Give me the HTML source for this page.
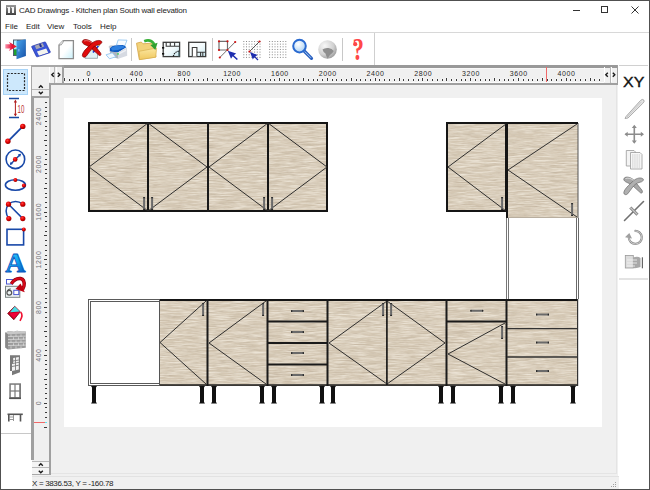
<!DOCTYPE html><html><head><meta charset="utf-8"><style>
*{margin:0;padding:0;box-sizing:border-box}
html,body{width:650px;height:490px;overflow:hidden;background:#fff;font-family:"Liberation Sans", sans-serif}
.a{position:absolute}
svg{position:absolute;overflow:visible}
</style></head><body>
<div class="a" style="left:0;top:0;width:650px;height:490px;background:#fff"></div>
<div class="a" style="left:6px;top:5px;width:10px;height:10px;background:linear-gradient(#9a9a9a,#404040)"></div>
<div class="a" style="left:8px;top:7px;width:2px;height:6px;background:#f4f4f4"></div>
<div class="a" style="left:7px;top:7px;width:1px;height:1px;background:#d8d8d8"></div>
<div class="a" style="left:12px;top:7px;width:2px;height:6px;background:#f4f4f4"></div>
<div class="a" style="left:11px;top:7px;width:1px;height:1px;background:#d8d8d8"></div>
<div class="a" style="left:19px;top:4.6px;font-size:8px;line-height:11px;color:#222;letter-spacing:-0.19px;white-space:nowrap">CAD Drawings - Kitchen plan South wall elevation</div>
<div class="a" style="left:573px;top:10px;width:7px;height:1px;background:#333"></div>
<div class="a" style="left:601px;top:6px;width:7px;height:7px;border:1px solid #333"></div>
<svg style="left:631px;top:6px" width="8" height="8"><path d="M0.5 0.5L7.5 7.5M7.5 0.5L0.5 7.5" stroke="#333" stroke-width="1"/></svg>
<div class="a" style="left:5px;top:20.5px;font-size:8px;line-height:11px;color:#222;white-space:nowrap">File</div>
<div class="a" style="left:26px;top:20.5px;font-size:8px;line-height:11px;color:#222;white-space:nowrap">Edit</div>
<div class="a" style="left:47px;top:20.5px;font-size:8px;line-height:11px;color:#222;white-space:nowrap">View</div>
<div class="a" style="left:73px;top:20.5px;font-size:8px;line-height:11px;color:#222;white-space:nowrap">Tools</div>
<div class="a" style="left:100px;top:20.5px;font-size:8px;line-height:11px;color:#222;white-space:nowrap">Help</div>
<div class="a" style="left:1px;top:32px;width:648px;height:1px;background:#d8d8d8"></div>
<div class="a" style="left:374px;top:33px;width:1px;height:32px;background:#cfcfcf"></div>
<div class="a" style="left:131px;top:38px;width:1px;height:23px;background:#c8c8c8"></div>
<div class="a" style="left:212px;top:38px;width:1px;height:23px;background:#c8c8c8"></div>
<div class="a" style="left:342px;top:38px;width:1px;height:23px;background:#c8c8c8"></div>
<div class="a" style="left:0;top:0;width:650px;height:490px;border:1px solid #505050;pointer-events:none;z-index:50"></div>
<div class="a" style="left:1px;top:65px;width:30px;height:1px;background:#cacaca"></div>
<div class="a" style="left:31px;top:65px;width:1px;height:31px;background:#a8a8a8"></div>
<div class="a" style="left:1px;top:433px;width:30px;height:1px;background:#c8c8c8"></div>
<div class="a" style="left:32px;top:65px;width:586px;height:412px;background:#f0f0f0"></div>
<div class="a" style="left:62px;top:65px;width:556px;height:3px;background:#999"></div><div class="a" style="left:64px;top:68px;width:540px;height:1px;background:#f8f8f8"></div><div class="a" style="left:64px;top:82px;width:540px;height:1px;background:#fbfbfb"></div>
<div class="a" style="left:62px;top:65px;width:2px;height:20px;background:#a0a0a0"></div>
<div class="a" style="left:49px;top:83px;width:569px;height:2px;background:#a0a0a0"></div>
<div class="a" style="left:617px;top:65px;width:1px;height:20px;background:#a0a0a0"></div>
<div class="a" style="left:610px;top:67px;width:1px;height:16px;background:#b8b8b8"></div>
<div class="a" style="left:54px;top:67px;width:1px;height:16px;background:#b8b8b8"></div>
<div class="a" style="left:31px;top:65px;width:31px;height:2px;background:#a8a8a8"></div>
<div class="a" style="left:31px;top:96px;width:3px;height:364px;background:#a0a0a0"></div><div class="a" style="left:32px;top:461px;width:17px;height:14px;background:#f4f4f4;border-top:1px solid #fff;border-bottom:1px solid #a8a8a8"></div>
<div class="a" style="left:32px;top:96px;width:17px;height:2px;background:#a0a0a0"></div>
<div class="a" style="left:49px;top:83px;width:2px;height:392px;background:#a0a0a0"></div>
<div class="a" style="left:32px;top:89px;width:17px;height:1px;background:#b8b8b8"></div>
<div class="a" style="left:32px;top:467px;width:17px;height:1px;background:#b8b8b8"></div>
<div class="a" style="left:32px;top:461px;width:17px;height:1px;background:#b8b8b8"></div>
<div class="a" style="left:604px;top:67px;width:1px;height:15px;background:#fff"></div>
<div class="a" style="left:611px;top:67px;width:1px;height:15px;background:#fff"></div>
<div class="a" style="left:49px;top:67px;width:1px;height:15px;background:#fff"></div>
<div class="a" style="left:56px;top:67px;width:1px;height:15px;background:#fff"></div>
<svg style="left:50.5px;top:72.3px" width="4" height="6"><path d="M2.8 0.8L0.8 2.8L2.8 4.8" fill="none" stroke="#1a1a1a" stroke-width="1.4"/></svg>
<svg style="left:57.2px;top:72.3px" width="4" height="6"><path d="M0.8 0.8L2.8 2.8L0.8 4.8" fill="none" stroke="#1a1a1a" stroke-width="1.4"/></svg>
<svg style="left:605.3px;top:72.3px" width="4" height="6"><path d="M2.8 0.8L0.8 2.8L2.8 4.8" fill="none" stroke="#1a1a1a" stroke-width="1.4"/></svg>
<svg style="left:612.2px;top:72.3px" width="4" height="6"><path d="M0.8 0.8L2.8 2.8L0.8 4.8" fill="none" stroke="#1a1a1a" stroke-width="1.4"/></svg>
<svg style="left:38px;top:84.5px" width="6" height="4"><path d="M0.8 2.8L2.8 0.8L4.8 2.8" fill="none" stroke="#1a1a1a" stroke-width="1.4"/></svg>
<svg style="left:38px;top:91.3px" width="6" height="4"><path d="M0.8 0.8L2.8 2.8L4.8 0.8" fill="none" stroke="#1a1a1a" stroke-width="1.4"/></svg>
<svg style="left:38px;top:463.3px" width="6" height="4"><path d="M0.8 2.8L2.8 0.8L4.8 2.8" fill="none" stroke="#1a1a1a" stroke-width="1.4"/></svg>
<svg style="left:38px;top:469.8px" width="6" height="4"><path d="M0.8 0.8L2.8 2.8L4.8 0.8" fill="none" stroke="#1a1a1a" stroke-width="1.4"/></svg>
<div class="a" style="left:64px;top:98px;width:538px;height:329px;background:#fff"></div>
<div class="a" style="left:51px;top:473px;width:566px;height:1px;background:#e4e4e4"></div>
<div class="a" style="left:616px;top:85px;width:1px;height:389px;background:#e4e4e4"></div>
<div class="a" style="left:32px;top:476px;width:587px;height:13px;background:#f0f0f0"></div>
<div class="a" style="left:32px;top:476px;width:587px;height:1px;background:#e2e2e2"></div>
<div class="a" style="left:32px;top:478px;font-size:8px;line-height:11px;color:#222;letter-spacing:-0.33px;white-space:nowrap">X = 3836.53, Y = -160.78</div>
<div class="a" style="left:615px;top:482px;width:1px;height:1px;background:#a0a0a0"></div><div class="a" style="left:613px;top:484px;width:1px;height:1px;background:#a0a0a0"></div><div class="a" style="left:615px;top:484px;width:1px;height:1px;background:#a0a0a0"></div><div class="a" style="left:611px;top:486px;width:1px;height:1px;background:#a0a0a0"></div><div class="a" style="left:613px;top:486px;width:1px;height:1px;background:#a0a0a0"></div><div class="a" style="left:615px;top:486px;width:1px;height:1px;background:#a0a0a0"></div>
<svg style="left:0;top:0" width="650" height="490"><rect x="63.5" y="77.5" width="2" height="4" fill="#fff" opacity="0.7"/><rect x="64" y="78" width="1" height="3" fill="#3a3a3a"/><rect x="68.5" y="78.5" width="2" height="3" fill="#fff" opacity="0.7"/><rect x="69" y="79" width="1" height="2" fill="#3a3a3a"/><rect x="73.5" y="78.5" width="2" height="3" fill="#fff" opacity="0.7"/><rect x="74" y="79" width="1" height="2" fill="#3a3a3a"/><rect x="77.5" y="78.5" width="2" height="3" fill="#fff" opacity="0.7"/><rect x="78" y="79" width="1" height="2" fill="#3a3a3a"/><rect x="82.5" y="78.5" width="2" height="3" fill="#fff" opacity="0.7"/><rect x="83" y="79" width="1" height="2" fill="#3a3a3a"/><rect x="87.5" y="77.5" width="2" height="4" fill="#fff" opacity="0.7"/><rect x="88" y="78" width="1" height="3" fill="#3a3a3a"/><rect x="92.5" y="78.5" width="2" height="3" fill="#fff" opacity="0.7"/><rect x="93" y="79" width="1" height="2" fill="#3a3a3a"/><rect x="97.5" y="78.5" width="2" height="3" fill="#fff" opacity="0.7"/><rect x="98" y="79" width="1" height="2" fill="#3a3a3a"/><rect x="101.5" y="78.5" width="2" height="3" fill="#fff" opacity="0.7"/><rect x="102" y="79" width="1" height="2" fill="#3a3a3a"/><rect x="106.5" y="78.5" width="2" height="3" fill="#fff" opacity="0.7"/><rect x="107" y="79" width="1" height="2" fill="#3a3a3a"/><rect x="111.5" y="77.5" width="2" height="4" fill="#fff" opacity="0.7"/><rect x="112" y="78" width="1" height="3" fill="#3a3a3a"/><rect x="116.5" y="78.5" width="2" height="3" fill="#fff" opacity="0.7"/><rect x="117" y="79" width="1" height="2" fill="#3a3a3a"/><rect x="120.5" y="78.5" width="2" height="3" fill="#fff" opacity="0.7"/><rect x="121" y="79" width="1" height="2" fill="#3a3a3a"/><rect x="125.5" y="78.5" width="2" height="3" fill="#fff" opacity="0.7"/><rect x="126" y="79" width="1" height="2" fill="#3a3a3a"/><rect x="130.5" y="78.5" width="2" height="3" fill="#fff" opacity="0.7"/><rect x="131" y="79" width="1" height="2" fill="#3a3a3a"/><rect x="135.5" y="77.5" width="2" height="4" fill="#fff" opacity="0.7"/><rect x="136" y="78" width="1" height="3" fill="#3a3a3a"/><rect x="140.5" y="78.5" width="2" height="3" fill="#fff" opacity="0.7"/><rect x="141" y="79" width="1" height="2" fill="#3a3a3a"/><rect x="144.5" y="78.5" width="2" height="3" fill="#fff" opacity="0.7"/><rect x="145" y="79" width="1" height="2" fill="#3a3a3a"/><rect x="149.5" y="78.5" width="2" height="3" fill="#fff" opacity="0.7"/><rect x="150" y="79" width="1" height="2" fill="#3a3a3a"/><rect x="154.5" y="78.5" width="2" height="3" fill="#fff" opacity="0.7"/><rect x="155" y="79" width="1" height="2" fill="#3a3a3a"/><rect x="159.5" y="77.5" width="2" height="4" fill="#fff" opacity="0.7"/><rect x="160" y="78" width="1" height="3" fill="#3a3a3a"/><rect x="163.5" y="78.5" width="2" height="3" fill="#fff" opacity="0.7"/><rect x="164" y="79" width="1" height="2" fill="#3a3a3a"/><rect x="168.5" y="78.5" width="2" height="3" fill="#fff" opacity="0.7"/><rect x="169" y="79" width="1" height="2" fill="#3a3a3a"/><rect x="173.5" y="78.5" width="2" height="3" fill="#fff" opacity="0.7"/><rect x="174" y="79" width="1" height="2" fill="#3a3a3a"/><rect x="178.5" y="78.5" width="2" height="3" fill="#fff" opacity="0.7"/><rect x="179" y="79" width="1" height="2" fill="#3a3a3a"/><rect x="183.5" y="77.5" width="2" height="4" fill="#fff" opacity="0.7"/><rect x="184" y="78" width="1" height="3" fill="#3a3a3a"/><rect x="187.5" y="78.5" width="2" height="3" fill="#fff" opacity="0.7"/><rect x="188" y="79" width="1" height="2" fill="#3a3a3a"/><rect x="192.5" y="78.5" width="2" height="3" fill="#fff" opacity="0.7"/><rect x="193" y="79" width="1" height="2" fill="#3a3a3a"/><rect x="197.5" y="78.5" width="2" height="3" fill="#fff" opacity="0.7"/><rect x="198" y="79" width="1" height="2" fill="#3a3a3a"/><rect x="202.5" y="78.5" width="2" height="3" fill="#fff" opacity="0.7"/><rect x="203" y="79" width="1" height="2" fill="#3a3a3a"/><rect x="206.5" y="77.5" width="2" height="4" fill="#fff" opacity="0.7"/><rect x="207" y="78" width="1" height="3" fill="#3a3a3a"/><rect x="211.5" y="78.5" width="2" height="3" fill="#fff" opacity="0.7"/><rect x="212" y="79" width="1" height="2" fill="#3a3a3a"/><rect x="216.5" y="78.5" width="2" height="3" fill="#fff" opacity="0.7"/><rect x="217" y="79" width="1" height="2" fill="#3a3a3a"/><rect x="221.5" y="78.5" width="2" height="3" fill="#fff" opacity="0.7"/><rect x="222" y="79" width="1" height="2" fill="#3a3a3a"/><rect x="226.5" y="78.5" width="2" height="3" fill="#fff" opacity="0.7"/><rect x="227" y="79" width="1" height="2" fill="#3a3a3a"/><rect x="230.5" y="77.5" width="2" height="4" fill="#fff" opacity="0.7"/><rect x="231" y="78" width="1" height="3" fill="#3a3a3a"/><rect x="235.5" y="78.5" width="2" height="3" fill="#fff" opacity="0.7"/><rect x="236" y="79" width="1" height="2" fill="#3a3a3a"/><rect x="240.5" y="78.5" width="2" height="3" fill="#fff" opacity="0.7"/><rect x="241" y="79" width="1" height="2" fill="#3a3a3a"/><rect x="245.5" y="78.5" width="2" height="3" fill="#fff" opacity="0.7"/><rect x="246" y="79" width="1" height="2" fill="#3a3a3a"/><rect x="249.5" y="78.5" width="2" height="3" fill="#fff" opacity="0.7"/><rect x="250" y="79" width="1" height="2" fill="#3a3a3a"/><rect x="254.5" y="77.5" width="2" height="4" fill="#fff" opacity="0.7"/><rect x="255" y="78" width="1" height="3" fill="#3a3a3a"/><rect x="259.5" y="78.5" width="2" height="3" fill="#fff" opacity="0.7"/><rect x="260" y="79" width="1" height="2" fill="#3a3a3a"/><rect x="264.5" y="78.5" width="2" height="3" fill="#fff" opacity="0.7"/><rect x="265" y="79" width="1" height="2" fill="#3a3a3a"/><rect x="269.5" y="78.5" width="2" height="3" fill="#fff" opacity="0.7"/><rect x="270" y="79" width="1" height="2" fill="#3a3a3a"/><rect x="273.5" y="78.5" width="2" height="3" fill="#fff" opacity="0.7"/><rect x="274" y="79" width="1" height="2" fill="#3a3a3a"/><rect x="278.5" y="77.5" width="2" height="4" fill="#fff" opacity="0.7"/><rect x="279" y="78" width="1" height="3" fill="#3a3a3a"/><rect x="283.5" y="78.5" width="2" height="3" fill="#fff" opacity="0.7"/><rect x="284" y="79" width="1" height="2" fill="#3a3a3a"/><rect x="288.5" y="78.5" width="2" height="3" fill="#fff" opacity="0.7"/><rect x="289" y="79" width="1" height="2" fill="#3a3a3a"/><rect x="292.5" y="78.5" width="2" height="3" fill="#fff" opacity="0.7"/><rect x="293" y="79" width="1" height="2" fill="#3a3a3a"/><rect x="297.5" y="78.5" width="2" height="3" fill="#fff" opacity="0.7"/><rect x="298" y="79" width="1" height="2" fill="#3a3a3a"/><rect x="302.5" y="77.5" width="2" height="4" fill="#fff" opacity="0.7"/><rect x="303" y="78" width="1" height="3" fill="#3a3a3a"/><rect x="307.5" y="78.5" width="2" height="3" fill="#fff" opacity="0.7"/><rect x="308" y="79" width="1" height="2" fill="#3a3a3a"/><rect x="312.5" y="78.5" width="2" height="3" fill="#fff" opacity="0.7"/><rect x="313" y="79" width="1" height="2" fill="#3a3a3a"/><rect x="316.5" y="78.5" width="2" height="3" fill="#fff" opacity="0.7"/><rect x="317" y="79" width="1" height="2" fill="#3a3a3a"/><rect x="321.5" y="78.5" width="2" height="3" fill="#fff" opacity="0.7"/><rect x="322" y="79" width="1" height="2" fill="#3a3a3a"/><rect x="326.5" y="77.5" width="2" height="4" fill="#fff" opacity="0.7"/><rect x="327" y="78" width="1" height="3" fill="#3a3a3a"/><rect x="331.5" y="78.5" width="2" height="3" fill="#fff" opacity="0.7"/><rect x="332" y="79" width="1" height="2" fill="#3a3a3a"/><rect x="335.5" y="78.5" width="2" height="3" fill="#fff" opacity="0.7"/><rect x="336" y="79" width="1" height="2" fill="#3a3a3a"/><rect x="340.5" y="78.5" width="2" height="3" fill="#fff" opacity="0.7"/><rect x="341" y="79" width="1" height="2" fill="#3a3a3a"/><rect x="345.5" y="78.5" width="2" height="3" fill="#fff" opacity="0.7"/><rect x="346" y="79" width="1" height="2" fill="#3a3a3a"/><rect x="350.5" y="77.5" width="2" height="4" fill="#fff" opacity="0.7"/><rect x="351" y="78" width="1" height="3" fill="#3a3a3a"/><rect x="355.5" y="78.5" width="2" height="3" fill="#fff" opacity="0.7"/><rect x="356" y="79" width="1" height="2" fill="#3a3a3a"/><rect x="359.5" y="78.5" width="2" height="3" fill="#fff" opacity="0.7"/><rect x="360" y="79" width="1" height="2" fill="#3a3a3a"/><rect x="364.5" y="78.5" width="2" height="3" fill="#fff" opacity="0.7"/><rect x="365" y="79" width="1" height="2" fill="#3a3a3a"/><rect x="369.5" y="78.5" width="2" height="3" fill="#fff" opacity="0.7"/><rect x="370" y="79" width="1" height="2" fill="#3a3a3a"/><rect x="374.5" y="77.5" width="2" height="4" fill="#fff" opacity="0.7"/><rect x="375" y="78" width="1" height="3" fill="#3a3a3a"/><rect x="378.5" y="78.5" width="2" height="3" fill="#fff" opacity="0.7"/><rect x="379" y="79" width="1" height="2" fill="#3a3a3a"/><rect x="383.5" y="78.5" width="2" height="3" fill="#fff" opacity="0.7"/><rect x="384" y="79" width="1" height="2" fill="#3a3a3a"/><rect x="388.5" y="78.5" width="2" height="3" fill="#fff" opacity="0.7"/><rect x="389" y="79" width="1" height="2" fill="#3a3a3a"/><rect x="393.5" y="78.5" width="2" height="3" fill="#fff" opacity="0.7"/><rect x="394" y="79" width="1" height="2" fill="#3a3a3a"/><rect x="398.5" y="77.5" width="2" height="4" fill="#fff" opacity="0.7"/><rect x="399" y="78" width="1" height="3" fill="#3a3a3a"/><rect x="402.5" y="78.5" width="2" height="3" fill="#fff" opacity="0.7"/><rect x="403" y="79" width="1" height="2" fill="#3a3a3a"/><rect x="407.5" y="78.5" width="2" height="3" fill="#fff" opacity="0.7"/><rect x="408" y="79" width="1" height="2" fill="#3a3a3a"/><rect x="412.5" y="78.5" width="2" height="3" fill="#fff" opacity="0.7"/><rect x="413" y="79" width="1" height="2" fill="#3a3a3a"/><rect x="417.5" y="78.5" width="2" height="3" fill="#fff" opacity="0.7"/><rect x="418" y="79" width="1" height="2" fill="#3a3a3a"/><rect x="421.5" y="77.5" width="2" height="4" fill="#fff" opacity="0.7"/><rect x="422" y="78" width="1" height="3" fill="#3a3a3a"/><rect x="426.5" y="78.5" width="2" height="3" fill="#fff" opacity="0.7"/><rect x="427" y="79" width="1" height="2" fill="#3a3a3a"/><rect x="431.5" y="78.5" width="2" height="3" fill="#fff" opacity="0.7"/><rect x="432" y="79" width="1" height="2" fill="#3a3a3a"/><rect x="436.5" y="78.5" width="2" height="3" fill="#fff" opacity="0.7"/><rect x="437" y="79" width="1" height="2" fill="#3a3a3a"/><rect x="441.5" y="78.5" width="2" height="3" fill="#fff" opacity="0.7"/><rect x="442" y="79" width="1" height="2" fill="#3a3a3a"/><rect x="445.5" y="77.5" width="2" height="4" fill="#fff" opacity="0.7"/><rect x="446" y="78" width="1" height="3" fill="#3a3a3a"/><rect x="450.5" y="78.5" width="2" height="3" fill="#fff" opacity="0.7"/><rect x="451" y="79" width="1" height="2" fill="#3a3a3a"/><rect x="455.5" y="78.5" width="2" height="3" fill="#fff" opacity="0.7"/><rect x="456" y="79" width="1" height="2" fill="#3a3a3a"/><rect x="460.5" y="78.5" width="2" height="3" fill="#fff" opacity="0.7"/><rect x="461" y="79" width="1" height="2" fill="#3a3a3a"/><rect x="464.5" y="78.5" width="2" height="3" fill="#fff" opacity="0.7"/><rect x="465" y="79" width="1" height="2" fill="#3a3a3a"/><rect x="469.5" y="77.5" width="2" height="4" fill="#fff" opacity="0.7"/><rect x="470" y="78" width="1" height="3" fill="#3a3a3a"/><rect x="474.5" y="78.5" width="2" height="3" fill="#fff" opacity="0.7"/><rect x="475" y="79" width="1" height="2" fill="#3a3a3a"/><rect x="479.5" y="78.5" width="2" height="3" fill="#fff" opacity="0.7"/><rect x="480" y="79" width="1" height="2" fill="#3a3a3a"/><rect x="484.5" y="78.5" width="2" height="3" fill="#fff" opacity="0.7"/><rect x="485" y="79" width="1" height="2" fill="#3a3a3a"/><rect x="488.5" y="78.5" width="2" height="3" fill="#fff" opacity="0.7"/><rect x="489" y="79" width="1" height="2" fill="#3a3a3a"/><rect x="493.5" y="77.5" width="2" height="4" fill="#fff" opacity="0.7"/><rect x="494" y="78" width="1" height="3" fill="#3a3a3a"/><rect x="498.5" y="78.5" width="2" height="3" fill="#fff" opacity="0.7"/><rect x="499" y="79" width="1" height="2" fill="#3a3a3a"/><rect x="503.5" y="78.5" width="2" height="3" fill="#fff" opacity="0.7"/><rect x="504" y="79" width="1" height="2" fill="#3a3a3a"/><rect x="507.5" y="78.5" width="2" height="3" fill="#fff" opacity="0.7"/><rect x="508" y="79" width="1" height="2" fill="#3a3a3a"/><rect x="512.5" y="78.5" width="2" height="3" fill="#fff" opacity="0.7"/><rect x="513" y="79" width="1" height="2" fill="#3a3a3a"/><rect x="517.5" y="77.5" width="2" height="4" fill="#fff" opacity="0.7"/><rect x="518" y="78" width="1" height="3" fill="#3a3a3a"/><rect x="522.5" y="78.5" width="2" height="3" fill="#fff" opacity="0.7"/><rect x="523" y="79" width="1" height="2" fill="#3a3a3a"/><rect x="527.5" y="78.5" width="2" height="3" fill="#fff" opacity="0.7"/><rect x="528" y="79" width="1" height="2" fill="#3a3a3a"/><rect x="531.5" y="78.5" width="2" height="3" fill="#fff" opacity="0.7"/><rect x="532" y="79" width="1" height="2" fill="#3a3a3a"/><rect x="536.5" y="78.5" width="2" height="3" fill="#fff" opacity="0.7"/><rect x="537" y="79" width="1" height="2" fill="#3a3a3a"/><rect x="541.5" y="77.5" width="2" height="4" fill="#fff" opacity="0.7"/><rect x="542" y="78" width="1" height="3" fill="#3a3a3a"/><rect x="546.5" y="78.5" width="2" height="3" fill="#fff" opacity="0.7"/><rect x="547" y="79" width="1" height="2" fill="#3a3a3a"/><rect x="550.5" y="78.5" width="2" height="3" fill="#fff" opacity="0.7"/><rect x="551" y="79" width="1" height="2" fill="#3a3a3a"/><rect x="555.5" y="78.5" width="2" height="3" fill="#fff" opacity="0.7"/><rect x="556" y="79" width="1" height="2" fill="#3a3a3a"/><rect x="560.5" y="78.5" width="2" height="3" fill="#fff" opacity="0.7"/><rect x="561" y="79" width="1" height="2" fill="#3a3a3a"/><rect x="565.5" y="77.5" width="2" height="4" fill="#fff" opacity="0.7"/><rect x="566" y="78" width="1" height="3" fill="#3a3a3a"/><rect x="569.5" y="78.5" width="2" height="3" fill="#fff" opacity="0.7"/><rect x="570" y="79" width="1" height="2" fill="#3a3a3a"/><rect x="574.5" y="78.5" width="2" height="3" fill="#fff" opacity="0.7"/><rect x="575" y="79" width="1" height="2" fill="#3a3a3a"/><rect x="579.5" y="78.5" width="2" height="3" fill="#fff" opacity="0.7"/><rect x="580" y="79" width="1" height="2" fill="#3a3a3a"/><rect x="584.5" y="78.5" width="2" height="3" fill="#fff" opacity="0.7"/><rect x="585" y="79" width="1" height="2" fill="#3a3a3a"/><rect x="589.5" y="77.5" width="2" height="4" fill="#fff" opacity="0.7"/><rect x="590" y="78" width="1" height="3" fill="#3a3a3a"/><rect x="593.5" y="78.5" width="2" height="3" fill="#fff" opacity="0.7"/><rect x="594" y="79" width="1" height="2" fill="#3a3a3a"/><rect x="598.5" y="78.5" width="2" height="3" fill="#fff" opacity="0.7"/><rect x="599" y="79" width="1" height="2" fill="#3a3a3a"/><text x="88.80" y="76.2" font-size="7" letter-spacing="0.6" text-anchor="middle" fill="#2a2a2a" font-family="Liberation Sans">0</text><text x="136.57" y="76.2" font-size="7" letter-spacing="0.6" text-anchor="middle" fill="#2a2a2a" font-family="Liberation Sans">400</text><text x="184.34" y="76.2" font-size="7" letter-spacing="0.6" text-anchor="middle" fill="#2a2a2a" font-family="Liberation Sans">800</text><text x="232.12" y="76.2" font-size="7" letter-spacing="0.6" text-anchor="middle" fill="#2a2a2a" font-family="Liberation Sans">1200</text><text x="279.89" y="76.2" font-size="7" letter-spacing="0.6" text-anchor="middle" fill="#2a2a2a" font-family="Liberation Sans">1600</text><text x="327.66" y="76.2" font-size="7" letter-spacing="0.6" text-anchor="middle" fill="#2a2a2a" font-family="Liberation Sans">2000</text><text x="375.43" y="76.2" font-size="7" letter-spacing="0.6" text-anchor="middle" fill="#2a2a2a" font-family="Liberation Sans">2400</text><text x="423.20" y="76.2" font-size="7" letter-spacing="0.6" text-anchor="middle" fill="#2a2a2a" font-family="Liberation Sans">2800</text><text x="470.98" y="76.2" font-size="7" letter-spacing="0.6" text-anchor="middle" fill="#2a2a2a" font-family="Liberation Sans">3200</text><text x="518.75" y="76.2" font-size="7" letter-spacing="0.6" text-anchor="middle" fill="#2a2a2a" font-family="Liberation Sans">3600</text><text x="566.52" y="76.2" font-size="7" letter-spacing="0.6" text-anchor="middle" fill="#2a2a2a" font-family="Liberation Sans">4000</text><rect x="546" y="67" width="1" height="15" fill="#f06868"/><rect x="44" y="427" width="3" height="1" fill="#3a3a3a"/><rect x="45" y="422" width="2" height="1" fill="#3a3a3a"/><rect x="45" y="417" width="2" height="1" fill="#3a3a3a"/><rect x="45" y="412" width="2" height="1" fill="#3a3a3a"/><rect x="45" y="407" width="2" height="1" fill="#3a3a3a"/><rect x="44" y="403" width="3" height="1" fill="#3a3a3a"/><rect x="45" y="398" width="2" height="1" fill="#3a3a3a"/><rect x="45" y="393" width="2" height="1" fill="#3a3a3a"/><rect x="45" y="388" width="2" height="1" fill="#3a3a3a"/><rect x="45" y="384" width="2" height="1" fill="#3a3a3a"/><rect x="44" y="379" width="3" height="1" fill="#3a3a3a"/><rect x="45" y="374" width="2" height="1" fill="#3a3a3a"/><rect x="45" y="369" width="2" height="1" fill="#3a3a3a"/><rect x="45" y="364" width="2" height="1" fill="#3a3a3a"/><rect x="45" y="360" width="2" height="1" fill="#3a3a3a"/><rect x="44" y="355" width="3" height="1" fill="#3a3a3a"/><rect x="45" y="350" width="2" height="1" fill="#3a3a3a"/><rect x="45" y="345" width="2" height="1" fill="#3a3a3a"/><rect x="45" y="341" width="2" height="1" fill="#3a3a3a"/><rect x="45" y="336" width="2" height="1" fill="#3a3a3a"/><rect x="44" y="331" width="3" height="1" fill="#3a3a3a"/><rect x="45" y="326" width="2" height="1" fill="#3a3a3a"/><rect x="45" y="321" width="2" height="1" fill="#3a3a3a"/><rect x="45" y="317" width="2" height="1" fill="#3a3a3a"/><rect x="45" y="312" width="2" height="1" fill="#3a3a3a"/><rect x="44" y="307" width="3" height="1" fill="#3a3a3a"/><rect x="45" y="302" width="2" height="1" fill="#3a3a3a"/><rect x="45" y="298" width="2" height="1" fill="#3a3a3a"/><rect x="45" y="293" width="2" height="1" fill="#3a3a3a"/><rect x="45" y="288" width="2" height="1" fill="#3a3a3a"/><rect x="44" y="283" width="3" height="1" fill="#3a3a3a"/><rect x="45" y="278" width="2" height="1" fill="#3a3a3a"/><rect x="45" y="274" width="2" height="1" fill="#3a3a3a"/><rect x="45" y="269" width="2" height="1" fill="#3a3a3a"/><rect x="45" y="264" width="2" height="1" fill="#3a3a3a"/><rect x="44" y="259" width="3" height="1" fill="#3a3a3a"/><rect x="45" y="255" width="2" height="1" fill="#3a3a3a"/><rect x="45" y="250" width="2" height="1" fill="#3a3a3a"/><rect x="45" y="245" width="2" height="1" fill="#3a3a3a"/><rect x="45" y="240" width="2" height="1" fill="#3a3a3a"/><rect x="44" y="235" width="3" height="1" fill="#3a3a3a"/><rect x="45" y="231" width="2" height="1" fill="#3a3a3a"/><rect x="45" y="226" width="2" height="1" fill="#3a3a3a"/><rect x="45" y="221" width="2" height="1" fill="#3a3a3a"/><rect x="45" y="216" width="2" height="1" fill="#3a3a3a"/><rect x="44" y="212" width="3" height="1" fill="#3a3a3a"/><rect x="45" y="207" width="2" height="1" fill="#3a3a3a"/><rect x="45" y="202" width="2" height="1" fill="#3a3a3a"/><rect x="45" y="197" width="2" height="1" fill="#3a3a3a"/><rect x="45" y="193" width="2" height="1" fill="#3a3a3a"/><rect x="44" y="188" width="3" height="1" fill="#3a3a3a"/><rect x="45" y="183" width="2" height="1" fill="#3a3a3a"/><rect x="45" y="178" width="2" height="1" fill="#3a3a3a"/><rect x="45" y="173" width="2" height="1" fill="#3a3a3a"/><rect x="45" y="169" width="2" height="1" fill="#3a3a3a"/><rect x="44" y="164" width="3" height="1" fill="#3a3a3a"/><rect x="45" y="159" width="2" height="1" fill="#3a3a3a"/><rect x="45" y="154" width="2" height="1" fill="#3a3a3a"/><rect x="45" y="150" width="2" height="1" fill="#3a3a3a"/><rect x="45" y="145" width="2" height="1" fill="#3a3a3a"/><rect x="44" y="140" width="3" height="1" fill="#3a3a3a"/><rect x="45" y="135" width="2" height="1" fill="#3a3a3a"/><rect x="45" y="130" width="2" height="1" fill="#3a3a3a"/><rect x="45" y="126" width="2" height="1" fill="#3a3a3a"/><rect x="45" y="121" width="2" height="1" fill="#3a3a3a"/><rect x="44" y="116" width="3" height="1" fill="#3a3a3a"/><rect x="45" y="111" width="2" height="1" fill="#3a3a3a"/><rect x="45" y="107" width="2" height="1" fill="#3a3a3a"/><rect x="45" y="102" width="2" height="1" fill="#3a3a3a"/><text transform="translate(41.3 402.90) rotate(-90)" x="0" y="0" font-size="7" letter-spacing="0.6" text-anchor="middle" fill="#707078" font-family="Liberation Sans">0</text><text transform="translate(41.3 355.13) rotate(-90)" x="0" y="0" font-size="7" letter-spacing="0.6" text-anchor="middle" fill="#707078" font-family="Liberation Sans">400</text><text transform="translate(41.3 307.36) rotate(-90)" x="0" y="0" font-size="7" letter-spacing="0.6" text-anchor="middle" fill="#707078" font-family="Liberation Sans">800</text><text transform="translate(41.3 259.58) rotate(-90)" x="0" y="0" font-size="7" letter-spacing="0.6" text-anchor="middle" fill="#707078" font-family="Liberation Sans">1200</text><text transform="translate(41.3 211.81) rotate(-90)" x="0" y="0" font-size="7" letter-spacing="0.6" text-anchor="middle" fill="#707078" font-family="Liberation Sans">1600</text><text transform="translate(41.3 164.04) rotate(-90)" x="0" y="0" font-size="7" letter-spacing="0.6" text-anchor="middle" fill="#707078" font-family="Liberation Sans">2000</text><text transform="translate(41.3 116.27) rotate(-90)" x="0" y="0" font-size="7" letter-spacing="0.6" text-anchor="middle" fill="#707078" font-family="Liberation Sans">2400</text><rect x="34" y="422" width="11" height="1" fill="#f06868"/><rect x="45" y="422" width="2" height="1" fill="#60e8f0"/></svg>
<svg style="left:0;top:0" width="650" height="490"><defs>
<filter id="grain" x="0" y="0" width="100%" height="100%" color-interpolation-filters="sRGB">
<feTurbulence type="fractalNoise" baseFrequency="0.06 1.5" numOctaves="3" seed="3" result="n1"/>
<feColorMatrix in="n1" type="matrix" values="0 0 0 0 0  0 0 0 0 0  0 0 0 0 0  2.1 0 0 0 -0.75" result="a1"/>
<feFlood flood-color="#ebe3d5" result="lite"/>
<feComposite in="lite" in2="a1" operator="in" result="la"/>
<feTurbulence type="fractalNoise" baseFrequency="0.05 1.1" numOctaves="3" seed="11" result="n2"/>
<feColorMatrix in="n2" type="matrix" values="0 0 0 0 0  0 0 0 0 0  0 0 0 0 0  1.6 0 0 0 -0.75" result="a2"/>
<feFlood flood-color="#bcae9a" result="dark"/>
<feComposite in="dark" in2="a2" operator="in" result="da"/>
<feFlood flood-color="#d4c7b3" result="base"/>
<feMerge><feMergeNode in="base"/><feMergeNode in="da"/><feMergeNode in="la"/></feMerge>
</filter>
</defs><rect x="88" y="122" width="240" height="90" filter="url(#grain)"/><rect x="89.0" y="123.0" width="238" height="88" fill="none" stroke="#151515" stroke-width="2"/><line x1="208" y1="122" x2="208" y2="212" stroke="#1a1a1a" stroke-width="2"/><rect x="147" y="122" width="2" height="90" fill="#151515"/><polyline points="148,123 89,167 148,211" fill="none" stroke="#262626" stroke-width="0.95"/><polyline points="148,123 207,167 148,211" fill="none" stroke="#262626" stroke-width="0.95"/><rect x="143.1" y="197" width="2" height="13" rx="0.8" fill="#6a6a6a"/><rect x="143.1" y="197" width="2" height="1.3" rx="0.6" fill="#2a2a2a"/><rect x="143.1" y="208.7" width="2" height="1.3" rx="0.6" fill="#2a2a2a"/><rect x="151.1" y="197" width="2" height="13" rx="0.8" fill="#6a6a6a"/><rect x="151.1" y="197" width="2" height="1.3" rx="0.6" fill="#2a2a2a"/><rect x="151.1" y="208.7" width="2" height="1.3" rx="0.6" fill="#2a2a2a"/><rect x="267" y="122" width="2" height="90" fill="#151515"/><polyline points="268,123 209,167 268,211" fill="none" stroke="#262626" stroke-width="0.95"/><polyline points="268,123 327,167 268,211" fill="none" stroke="#262626" stroke-width="0.95"/><rect x="263.1" y="197" width="2" height="13" rx="0.8" fill="#6a6a6a"/><rect x="263.1" y="197" width="2" height="1.3" rx="0.6" fill="#2a2a2a"/><rect x="263.1" y="208.7" width="2" height="1.3" rx="0.6" fill="#2a2a2a"/><rect x="271.1" y="197" width="2" height="13" rx="0.8" fill="#6a6a6a"/><rect x="271.1" y="197" width="2" height="1.3" rx="0.6" fill="#2a2a2a"/><rect x="271.1" y="208.7" width="2" height="1.3" rx="0.6" fill="#2a2a2a"/><rect x="446" y="122" width="61" height="90" filter="url(#grain)"/><rect x="447.0" y="123.0" width="59" height="88" fill="none" stroke="#151515" stroke-width="2"/><polyline points="506,124 448,167 506,211" fill="none" stroke="#262626" stroke-width="0.95"/><rect x="501.1" y="197" width="2" height="13" rx="0.8" fill="#6a6a6a"/><rect x="501.1" y="197" width="2" height="1.3" rx="0.6" fill="#2a2a2a"/><rect x="501.1" y="208.7" width="2" height="1.3" rx="0.6" fill="#2a2a2a"/><rect x="507" y="123" width="71" height="95" filter="url(#grain)"/><rect x="577.5" y="123" width="1" height="95" fill="#555"/><rect x="506" y="122" width="72" height="2" fill="#151515"/><rect x="506" y="122" width="2" height="96" fill="#151515"/><rect x="508" y="217" width="69" height="1" fill="#b8ae9f"/><polyline points="577,124 508,170 577,217" fill="none" stroke="#262626" stroke-width="0.95"/><rect x="571.1" y="203" width="2" height="13" rx="0.8" fill="#6a6a6a"/><rect x="571.1" y="203" width="2" height="1.3" rx="0.6" fill="#2a2a2a"/><rect x="571.1" y="214.7" width="2" height="1.3" rx="0.6" fill="#2a2a2a"/><rect x="506" y="218" width="1" height="82" fill="#777"/><rect x="508" y="218" width="1" height="82" fill="#777"/><rect x="576" y="218" width="1" height="81" fill="#6a6a6a"/><rect x="578" y="218" width="1" height="81" fill="#6a6a6a"/><rect x="88.5" y="299.5" width="71" height="86" fill="#fff" stroke="#5a5a5a" stroke-width="1"/><rect x="90.5" y="301.5" width="69" height="82" fill="none" stroke="#5a5a5a" stroke-width="1"/><rect x="160" y="299" width="418" height="87" filter="url(#grain)"/><rect x="159" y="299" width="419" height="2" fill="#151515"/><rect x="159" y="384.3" width="419" height="1.5" fill="#151515"/><rect x="159" y="299" width="1" height="87" fill="#555"/><line x1="207.5" y1="299" x2="207.5" y2="386" stroke="#1a1a1a" stroke-width="2"/><polyline points="206,301 160,342.5 206,384" fill="none" stroke="#262626" stroke-width="0.95"/><rect x="202.1" y="303" width="2" height="13" rx="0.8" fill="#6a6a6a"/><rect x="202.1" y="303" width="2" height="1.3" rx="0.6" fill="#2a2a2a"/><rect x="202.1" y="314.7" width="2" height="1.3" rx="0.6" fill="#2a2a2a"/><line x1="267.5" y1="299" x2="267.5" y2="386" stroke="#1a1a1a" stroke-width="2"/><polyline points="266,301 209,343 266,384" fill="none" stroke="#262626" stroke-width="0.95"/><rect x="262.1" y="303" width="2" height="13" rx="0.8" fill="#6a6a6a"/><rect x="262.1" y="303" width="2" height="1.3" rx="0.6" fill="#2a2a2a"/><rect x="262.1" y="314.7" width="2" height="1.3" rx="0.6" fill="#2a2a2a"/><line x1="327.5" y1="299" x2="327.5" y2="386" stroke="#1a1a1a" stroke-width="2"/><line x1="268" y1="321.5" x2="328" y2="321.5" stroke="#1a1a1a" stroke-width="2"/><line x1="268" y1="343" x2="328" y2="343" stroke="#1a1a1a" stroke-width="2"/><line x1="268" y1="364.5" x2="328" y2="364.5" stroke="#1a1a1a" stroke-width="2"/><rect x="291.0" y="310" width="13" height="2" rx="0.8" fill="#6a6a6a"/><rect x="291.0" y="310" width="1.3" height="2" rx="0.6" fill="#2a2a2a"/><rect x="302.7" y="310" width="1.3" height="2" rx="0.6" fill="#2a2a2a"/><rect x="291.0" y="331" width="13" height="2" rx="0.8" fill="#6a6a6a"/><rect x="291.0" y="331" width="1.3" height="2" rx="0.6" fill="#2a2a2a"/><rect x="302.7" y="331" width="1.3" height="2" rx="0.6" fill="#2a2a2a"/><rect x="291.0" y="352" width="13" height="2" rx="0.8" fill="#6a6a6a"/><rect x="291.0" y="352" width="1.3" height="2" rx="0.6" fill="#2a2a2a"/><rect x="302.7" y="352" width="1.3" height="2" rx="0.6" fill="#2a2a2a"/><rect x="291.0" y="374" width="13" height="2" rx="0.8" fill="#6a6a6a"/><rect x="291.0" y="374" width="1.3" height="2" rx="0.6" fill="#2a2a2a"/><rect x="302.7" y="374" width="1.3" height="2" rx="0.6" fill="#2a2a2a"/><line x1="446.5" y1="299" x2="446.5" y2="386" stroke="#1a1a1a" stroke-width="2"/><rect x="386.1" y="299" width="1.6" height="86" fill="#111"/><polyline points="387,301 329,343 387,384 445,343 387,301" fill="none" stroke="#262626" stroke-width="0.95"/><rect x="382.1" y="303" width="2" height="13" rx="0.8" fill="#6a6a6a"/><rect x="382.1" y="303" width="2" height="1.3" rx="0.6" fill="#2a2a2a"/><rect x="382.1" y="314.7" width="2" height="1.3" rx="0.6" fill="#2a2a2a"/><rect x="390.1" y="303" width="2" height="13" rx="0.8" fill="#6a6a6a"/><rect x="390.1" y="303" width="2" height="1.3" rx="0.6" fill="#2a2a2a"/><rect x="390.1" y="314.7" width="2" height="1.3" rx="0.6" fill="#2a2a2a"/><line x1="506.5" y1="299" x2="506.5" y2="386" stroke="#1a1a1a" stroke-width="2"/><line x1="447" y1="321.5" x2="507" y2="321.5" stroke="#1a1a1a" stroke-width="2"/><rect x="470.3" y="309.7" width="13" height="2" rx="0.8" fill="#6a6a6a"/><rect x="470.3" y="309.7" width="1.3" height="2" rx="0.6" fill="#2a2a2a"/><rect x="482.0" y="309.7" width="1.3" height="2" rx="0.6" fill="#2a2a2a"/><polyline points="505,323 448,354 505,384" fill="none" stroke="#262626" stroke-width="0.95"/><rect x="501.1" y="326" width="2" height="13" rx="0.8" fill="#6a6a6a"/><rect x="501.1" y="326" width="2" height="1.3" rx="0.6" fill="#2a2a2a"/><rect x="501.1" y="337.7" width="2" height="1.3" rx="0.6" fill="#2a2a2a"/><rect x="577" y="299" width="1.2" height="87" fill="#333"/><line x1="507" y1="328.6" x2="578" y2="328.6" stroke="#333" stroke-width="1.3"/><line x1="507" y1="357" x2="578" y2="357" stroke="#333" stroke-width="1.3"/><rect x="536.0" y="313.5" width="13" height="2" rx="0.8" fill="#6a6a6a"/><rect x="536.0" y="313.5" width="1.3" height="2" rx="0.6" fill="#2a2a2a"/><rect x="547.7" y="313.5" width="1.3" height="2" rx="0.6" fill="#2a2a2a"/><rect x="536.0" y="341.5" width="13" height="2" rx="0.8" fill="#6a6a6a"/><rect x="536.0" y="341.5" width="1.3" height="2" rx="0.6" fill="#2a2a2a"/><rect x="547.7" y="341.5" width="1.3" height="2" rx="0.6" fill="#2a2a2a"/><rect x="536.0" y="370" width="13" height="2" rx="0.8" fill="#6a6a6a"/><rect x="536.0" y="370" width="1.3" height="2" rx="0.6" fill="#2a2a2a"/><rect x="547.7" y="370" width="1.3" height="2" rx="0.6" fill="#2a2a2a"/><path d="M91 386 L97 386 L96 387.5 L96 402.1 L97 403.6 L91 403.6 L92 402.1 L92 387.5 Z" fill="#111"/><path d="M199 386 L205 386 L204 387.5 L204 402.1 L205 403.6 L199 403.6 L200 402.1 L200 387.5 Z" fill="#111"/><path d="M211 386 L217 386 L216 387.5 L216 402.1 L217 403.6 L211 403.6 L212 402.1 L212 387.5 Z" fill="#111"/><path d="M259 386 L265 386 L264 387.5 L264 402.1 L265 403.6 L259 403.6 L260 402.1 L260 387.5 Z" fill="#111"/><path d="M271 386 L277 386 L276 387.5 L276 402.1 L277 403.6 L271 403.6 L272 402.1 L272 387.5 Z" fill="#111"/><path d="M319 386 L325 386 L324 387.5 L324 402.1 L325 403.6 L319 403.6 L320 402.1 L320 387.5 Z" fill="#111"/><path d="M330 386 L336 386 L335 387.5 L335 402.1 L336 403.6 L330 403.6 L331 402.1 L331 387.5 Z" fill="#111"/><path d="M438 386 L444 386 L443 387.5 L443 402.1 L444 403.6 L438 403.6 L439 402.1 L439 387.5 Z" fill="#111"/><path d="M450 386 L456 386 L455 387.5 L455 402.1 L456 403.6 L450 403.6 L451 402.1 L451 387.5 Z" fill="#111"/><path d="M498 386 L504 386 L503 387.5 L503 402.1 L504 403.6 L498 403.6 L499 402.1 L499 387.5 Z" fill="#111"/><path d="M510 386 L516 386 L515 387.5 L515 402.1 L516 403.6 L510 403.6 L511 402.1 L511 387.5 Z" fill="#111"/><path d="M570 386 L576 386 L575 387.5 L575 402.1 L576 403.6 L570 403.6 L571 402.1 L571 387.5 Z" fill="#111"/></svg>
<svg style="left:0;top:0" width="650" height="490"><defs><linearGradient id="gDoor" x1="0" y1="0" x2="1" y2="1"><stop offset="0" stop-color="#4aa8ee"/><stop offset="1" stop-color="#1550a8"/></linearGradient><linearGradient id="gArrow" x1="0" y1="0" x2="1" y2="0"><stop offset="0" stop-color="#f890a8"/><stop offset="0.6" stop-color="#e81038"/><stop offset="1" stop-color="#e83020"/></linearGradient><linearGradient id="gPage" x1="0" y1="0" x2="1" y2="1"><stop offset="0" stop-color="#ffffff"/><stop offset="0.5" stop-color="#ffffff"/><stop offset="1" stop-color="#c8f0fa"/></linearGradient><linearGradient id="gFold" x1="0" y1="0" x2="0" y2="1"><stop offset="0" stop-color="#fbe7a0"/><stop offset="1" stop-color="#f0c860"/></linearGradient><radialGradient id="gLens" cx="0.4" cy="0.35" r="0.7"><stop offset="0" stop-color="#ffffff"/><stop offset="1" stop-color="#a8d0f4"/></radialGradient><radialGradient id="gGlobe" cx="0.35" cy="0.3" r="0.8"><stop offset="0" stop-color="#f8f8f8"/><stop offset="0.6" stop-color="#d0d0d0"/><stop offset="1" stop-color="#909090"/></radialGradient><radialGradient id="gRed" cx="0.4" cy="0.35" r="0.7"><stop offset="0" stop-color="#ff4040"/><stop offset="0.5" stop-color="#e00000"/><stop offset="1" stop-color="#900000"/></radialGradient><linearGradient id="gA" x1="0" y1="0" x2="1" y2="1"><stop offset="0" stop-color="#60e0ff"/><stop offset="0.5" stop-color="#10a8f0"/><stop offset="1" stop-color="#0040b0"/></linearGradient><linearGradient id="gPlan" x1="0" y1="0" x2="1" y2="1"><stop offset="0" stop-color="#ffffff"/><stop offset="0.5" stop-color="#f4fbfd"/><stop offset="1" stop-color="#c8e8f0"/></linearGradient><linearGradient id="gGrey" x1="0" y1="0" x2="1" y2="1"><stop offset="0" stop-color="#e8e8e8"/><stop offset="1" stop-color="#8a8a8a"/></linearGradient></defs><rect x="13" y="39.5" width="12.5" height="16.5" fill="#506070"/><rect x="14" y="40.5" width="3" height="9" fill="#b0f0ff"/><rect x="14" y="49.5" width="3" height="5.5" fill="#20a030"/><path d="M16.5 41 L25.8 39.3 L25.8 56 L16.5 59.2 Z" fill="url(#gDoor)"/><rect x="18.5" y="49" width="0.8" height="2.5" fill="#9fd8ff"/><path d="M5.3 44.2 L10.2 44.2 L8.8 41.8 L16.8 46.4 L8.8 51 L10.2 48.6 L5.3 48.6 Z" fill="url(#gArrow)"/><g transform="translate(41 49.4) scale(1 0.82) rotate(-22) translate(-41.2 -49.2)"><rect x="33.7" y="42.2" width="15" height="14" rx="0.8" fill="#3a56d8"/><rect x="37" y="42.2" width="8.5" height="5" fill="#a8a8b4"/><rect x="41.5" y="43" width="2" height="3.4" fill="#1a2a90"/><rect x="36.5" y="50" width="10" height="5.6" fill="#f4f4ee"/><rect x="33.7" y="42.2" width="15" height="14" rx="0.8" fill="none" stroke="#2030a8" stroke-width="0.7"/></g><path d="M63.3 40.6 H73.4 V58.6 H59 V45 Z" fill="url(#gPage)" stroke="#8c8c8c" stroke-width="1.3"/><path d="M59 45 Q62 45.5 62.2 43.2 Q63.5 43 63.3 40.6" fill="#fff" stroke="#8c8c8c" stroke-width="0.9"/><path d="M85 50 H97.5 V58.3 H85 Z" fill="#dff2f6" stroke="#98a4a8" stroke-width="0.9"/><path d="M99.5 44.5 L93 52.5" stroke="#2040d0" stroke-width="1.7"/><path d="M99.6 44.3 L98.4 45.7" stroke="#f0d040" stroke-width="1.7"/><path d="M82.3 41.5 C83 38.8 88.5 38.8 92.5 42.8 L100.3 52.5 C101.6 54.3 100.8 56.3 99 55.3 L90.5 47.6 C87 45 82 44.5 82.3 41.5 Z" fill="#d80c0c" stroke="#800000" stroke-width="0.7"/><path d="M101.8 41.6 C102.2 43.3 100.5 44.4 98.5 44.7 C95 45.5 92.5 47.5 90.5 50.5 L86.2 56.3 C84.8 57.8 82.3 57.3 82.3 55.3 C82.5 53 84.5 50.5 87 48 L92 43.2 C95.3 40.3 99.8 39.6 101.8 41.6 Z" fill="#e00c0c" stroke="#800000" stroke-width="0.7"/><path d="M84 41 C87 40 90 41 92 43" fill="none" stroke="#f08080" stroke-width="0.8"/><path d="M118.2 39.9 L127 40.2 L124.6 46.3 L116.5 45 Z" fill="#f6faff" stroke="#88c0f0" stroke-width="0.8"/><path d="M108.5 47 Q109 45.5 111 45.3 L116 45.5 L110 49 Z" fill="#c8ccd4"/><path d="M109.8 48.4 Q112 45.8 115 45.5 L122.5 45 Q125 45.3 126.3 47.3 L118.3 52.3 L112.5 52.8 L109.8 51.2 Z" fill="#0c58c0"/><path d="M111 48 Q113 46.3 115.5 46 L122 45.7 Q124 46 125 47.2 L118 50 L112 50.5 Z" fill="#2e80e0"/><path d="M118 52.2 L127 47.4 L127.2 55.8 L118.4 58.8 Z" fill="#d6dae2"/><path d="M119 53 L126 49.3 L126 51 L119 54.5 Z" fill="#eef0f4"/><path d="M109.8 51.2 L118 52.5 L118.4 58.8 L111 56.4 Z" fill="#aeb4be"/><path d="M106 54.8 L112.3 52.8 L115.8 56.7 L109.6 58.8 Z" fill="#f0f8ff" stroke="#88c0f0" stroke-width="0.8"/><rect x="117.3" y="53" width="1.4" height="1.8" fill="#40d060"/><path d="M136.5 43.2 L141.3 42 L143 43.8 L153.5 43 L156 57 L139.3 59.6 Z" fill="#f2d27a" stroke="#d4a448" stroke-width="0.8"/><path d="M139 51.3 L156.6 48 L155.7 57.2 L139.6 59.6 Z" fill="url(#gFold)" stroke="#d8b050" stroke-width="0.7"/><path d="M144.2 41.2 Q150.5 38.5 154.3 44.2" fill="none" stroke="#38b038" stroke-width="2.6"/><path d="M150.3 45 L157.6 42.8 L155.3 50 Z" fill="#30a030"/><rect x="163.2" y="42.3" width="16.4" height="14.3" fill="url(#gPlan)" stroke="#3c3c3c" stroke-width="1.3"/><path d="M166.2 42.3 V46.2 H179.6 M170.3 42.3 V46.2 M174.6 42.3 V46.2" fill="none" stroke="#3c3c3c" stroke-width="1.1"/><path d="M173.3 56.6 Q174.3 51.6 179.6 51" fill="none" stroke="#222" stroke-width="1.2" stroke-dasharray="1.5 0.8"/><rect x="162" y="47" width="2.2" height="1.6" fill="#111"/><rect x="162" y="53" width="2.2" height="1.6" fill="#111"/><rect x="178.3" y="51.5" width="1.3" height="5" fill="#4a6a70"/><rect x="188.7" y="42.3" width="17" height="14.3" fill="url(#gPlan)" stroke="#3c3c3c" stroke-width="1.3"/><path d="M192.3 56.6 V47.5 H196.9 V56.6 M196.9 52.3 H205.7 M200.6 52.3 V56.6 M202.8 52.3 V56.6" fill="#fff" stroke="#3c3c3c" stroke-width="1.1"/><path d="M219 41.3 H227.5 V50 H219 Z" fill="none" stroke="#707070" stroke-width="1.2"/><path d="M219.8 57.5 L235.2 42" stroke="#707070" stroke-width="1"/><circle cx="219" cy="41.3" r="1.1" fill="#d01010"/><circle cx="227.5" cy="41.3" r="1.1" fill="#d01010"/><circle cx="219" cy="50" r="1.1" fill="#d01010"/><circle cx="227.5" cy="50" r="1.1" fill="#d01010"/><circle cx="235.2" cy="42" r="1.1" fill="#d01010"/><circle cx="219.8" cy="57.5" r="1.1" fill="#d01010"/><path d="M227.8 50.7 L236.2 53.6 L233.8 55.2 L237.9 59 L236.8 60 L232.7 56.2 L231 58.8 Z" fill="#1f2fb0"/><rect x="243.30" y="41.00" width="1" height="1" fill="#8a8a8a"/><rect x="243.30" y="43.65" width="1" height="1" fill="#8a8a8a"/><rect x="243.30" y="46.30" width="1" height="1" fill="#8a8a8a"/><rect x="243.30" y="48.95" width="1" height="1" fill="#8a8a8a"/><rect x="243.30" y="51.60" width="1" height="1" fill="#8a8a8a"/><rect x="243.30" y="54.25" width="1" height="1" fill="#8a8a8a"/><rect x="243.30" y="56.90" width="1" height="1" fill="#8a8a8a"/><rect x="246.00" y="41.00" width="1" height="1" fill="#8a8a8a"/><rect x="246.00" y="43.65" width="1" height="1" fill="#8a8a8a"/><rect x="246.00" y="46.30" width="1" height="1" fill="#8a8a8a"/><rect x="246.00" y="48.95" width="1" height="1" fill="#8a8a8a"/><rect x="246.00" y="51.60" width="1" height="1" fill="#8a8a8a"/><rect x="246.00" y="54.25" width="1" height="1" fill="#8a8a8a"/><rect x="246.00" y="56.90" width="1" height="1" fill="#8a8a8a"/><rect x="248.70" y="41.00" width="1" height="1" fill="#8a8a8a"/><rect x="248.70" y="43.65" width="1" height="1" fill="#8a8a8a"/><rect x="248.70" y="46.30" width="1" height="1" fill="#8a8a8a"/><rect x="248.70" y="48.95" width="1" height="1" fill="#8a8a8a"/><rect x="248.70" y="51.60" width="1" height="1" fill="#8a8a8a"/><rect x="248.70" y="54.25" width="1" height="1" fill="#8a8a8a"/><rect x="248.70" y="56.90" width="1" height="1" fill="#8a8a8a"/><rect x="251.40" y="41.00" width="1" height="1" fill="#8a8a8a"/><rect x="251.40" y="43.65" width="1" height="1" fill="#8a8a8a"/><rect x="251.40" y="46.30" width="1" height="1" fill="#8a8a8a"/><rect x="251.40" y="48.95" width="1" height="1" fill="#8a8a8a"/><rect x="251.40" y="51.60" width="1" height="1" fill="#8a8a8a"/><rect x="251.40" y="54.25" width="1" height="1" fill="#8a8a8a"/><rect x="251.40" y="56.90" width="1" height="1" fill="#8a8a8a"/><rect x="254.10" y="41.00" width="1" height="1" fill="#8a8a8a"/><rect x="254.10" y="43.65" width="1" height="1" fill="#8a8a8a"/><rect x="254.10" y="46.30" width="1" height="1" fill="#8a8a8a"/><rect x="254.10" y="48.95" width="1" height="1" fill="#8a8a8a"/><rect x="254.10" y="51.60" width="1" height="1" fill="#8a8a8a"/><rect x="254.10" y="54.25" width="1" height="1" fill="#8a8a8a"/><rect x="254.10" y="56.90" width="1" height="1" fill="#8a8a8a"/><rect x="256.80" y="41.00" width="1" height="1" fill="#8a8a8a"/><rect x="256.80" y="43.65" width="1" height="1" fill="#8a8a8a"/><rect x="256.80" y="46.30" width="1" height="1" fill="#8a8a8a"/><rect x="256.80" y="48.95" width="1" height="1" fill="#8a8a8a"/><rect x="256.80" y="51.60" width="1" height="1" fill="#8a8a8a"/><rect x="256.80" y="54.25" width="1" height="1" fill="#8a8a8a"/><rect x="256.80" y="56.90" width="1" height="1" fill="#8a8a8a"/><rect x="259.50" y="41.00" width="1" height="1" fill="#8a8a8a"/><rect x="259.50" y="43.65" width="1" height="1" fill="#8a8a8a"/><rect x="259.50" y="46.30" width="1" height="1" fill="#8a8a8a"/><rect x="259.50" y="48.95" width="1" height="1" fill="#8a8a8a"/><rect x="259.50" y="51.60" width="1" height="1" fill="#8a8a8a"/><rect x="259.50" y="54.25" width="1" height="1" fill="#8a8a8a"/><rect x="259.50" y="56.90" width="1" height="1" fill="#8a8a8a"/><path d="M249.5 51.5 L259.5 41.5" stroke="#555" stroke-width="1"/><circle cx="259.5" cy="41.5" r="1.1" fill="#d01010"/><circle cx="249.5" cy="51.5" r="1.1" fill="#d01010"/><path d="M250 52 L257.5 55 L255.3 56.4 L258.5 59.6 L257.5 60.4 L254.3 57.3 L252.8 59.6 Z" fill="#1f2fb0"/><rect x="269.10" y="41.00" width="1" height="1" fill="#8a8a8a"/><rect x="269.10" y="43.65" width="1" height="1" fill="#8a8a8a"/><rect x="269.10" y="46.30" width="1" height="1" fill="#8a8a8a"/><rect x="269.10" y="48.95" width="1" height="1" fill="#8a8a8a"/><rect x="269.10" y="51.60" width="1" height="1" fill="#8a8a8a"/><rect x="269.10" y="54.25" width="1" height="1" fill="#8a8a8a"/><rect x="269.10" y="56.90" width="1" height="1" fill="#8a8a8a"/><rect x="271.80" y="41.00" width="1" height="1" fill="#8a8a8a"/><rect x="271.80" y="43.65" width="1" height="1" fill="#8a8a8a"/><rect x="271.80" y="46.30" width="1" height="1" fill="#8a8a8a"/><rect x="271.80" y="48.95" width="1" height="1" fill="#8a8a8a"/><rect x="271.80" y="51.60" width="1" height="1" fill="#8a8a8a"/><rect x="271.80" y="54.25" width="1" height="1" fill="#8a8a8a"/><rect x="271.80" y="56.90" width="1" height="1" fill="#8a8a8a"/><rect x="274.50" y="41.00" width="1" height="1" fill="#8a8a8a"/><rect x="274.50" y="43.65" width="1" height="1" fill="#8a8a8a"/><rect x="274.50" y="46.30" width="1" height="1" fill="#8a8a8a"/><rect x="274.50" y="48.95" width="1" height="1" fill="#8a8a8a"/><rect x="274.50" y="51.60" width="1" height="1" fill="#8a8a8a"/><rect x="274.50" y="54.25" width="1" height="1" fill="#8a8a8a"/><rect x="274.50" y="56.90" width="1" height="1" fill="#8a8a8a"/><rect x="277.20" y="41.00" width="1" height="1" fill="#8a8a8a"/><rect x="277.20" y="43.65" width="1" height="1" fill="#8a8a8a"/><rect x="277.20" y="46.30" width="1" height="1" fill="#8a8a8a"/><rect x="277.20" y="48.95" width="1" height="1" fill="#8a8a8a"/><rect x="277.20" y="51.60" width="1" height="1" fill="#8a8a8a"/><rect x="277.20" y="54.25" width="1" height="1" fill="#8a8a8a"/><rect x="277.20" y="56.90" width="1" height="1" fill="#8a8a8a"/><rect x="279.90" y="41.00" width="1" height="1" fill="#8a8a8a"/><rect x="279.90" y="43.65" width="1" height="1" fill="#8a8a8a"/><rect x="279.90" y="46.30" width="1" height="1" fill="#8a8a8a"/><rect x="279.90" y="48.95" width="1" height="1" fill="#8a8a8a"/><rect x="279.90" y="51.60" width="1" height="1" fill="#8a8a8a"/><rect x="279.90" y="54.25" width="1" height="1" fill="#8a8a8a"/><rect x="279.90" y="56.90" width="1" height="1" fill="#8a8a8a"/><rect x="282.60" y="41.00" width="1" height="1" fill="#8a8a8a"/><rect x="282.60" y="43.65" width="1" height="1" fill="#8a8a8a"/><rect x="282.60" y="46.30" width="1" height="1" fill="#8a8a8a"/><rect x="282.60" y="48.95" width="1" height="1" fill="#8a8a8a"/><rect x="282.60" y="51.60" width="1" height="1" fill="#8a8a8a"/><rect x="282.60" y="54.25" width="1" height="1" fill="#8a8a8a"/><rect x="282.60" y="56.90" width="1" height="1" fill="#8a8a8a"/><rect x="285.30" y="41.00" width="1" height="1" fill="#8a8a8a"/><rect x="285.30" y="43.65" width="1" height="1" fill="#8a8a8a"/><rect x="285.30" y="46.30" width="1" height="1" fill="#8a8a8a"/><rect x="285.30" y="48.95" width="1" height="1" fill="#8a8a8a"/><rect x="285.30" y="51.60" width="1" height="1" fill="#8a8a8a"/><rect x="285.30" y="54.25" width="1" height="1" fill="#8a8a8a"/><rect x="285.30" y="56.90" width="1" height="1" fill="#8a8a8a"/><path d="M304.2 51 L311.5 58.3" stroke="#2a60c0" stroke-width="3.2" stroke-linecap="round"/><path d="M304.6 51.4 L311 57.8" stroke="#a8ccf4" stroke-width="1"/><circle cx="299.5" cy="46.1" r="6.3" fill="url(#gLens)" stroke="#2a6ad0" stroke-width="2"/><circle cx="327.5" cy="49.5" r="9.3" fill="url(#gGlobe)"/><path d="M322.5 49.5 Q325 47.5 328.5 48 Q332 48.5 333.8 51 Q332.5 53.5 330 55 Q328.5 56.5 327.8 58.6 Q326 56 325.5 53.5 Q323 52 322.5 49.5 Z" fill="#8e8e8e"/><text transform="translate(358.3 60.0) scale(0.8 1.08)" x="0" y="0" text-anchor="middle" font-family="Liberation Serif" font-weight="bold" font-size="28.5" fill="#ff4848">?</text><circle cx="355.2" cy="44.2" r="2.1" fill="#ff4848"/><rect x="3.5" y="69.5" width="24" height="25" fill="#cde8fc" stroke="#a8d4f8" stroke-width="1"/><rect x="7.5" y="73.5" width="17" height="17" fill="none" stroke="#282828" stroke-width="1.2" stroke-dasharray="2 1.4"/><path d="M9 98.6 H19 M9 117.6 H19" stroke="#1848a0" stroke-width="1.5"/><path d="M15.4 101 V115.5" stroke="#b01c1c" stroke-width="1"/><path d="M15.4 99.6 L13.8 102.5 H17 Z M15.4 116.6 L13.8 113.7 H17 Z" fill="#b01c1c"/><text x="17.6" y="113.3" font-family="Liberation Sans" font-size="11.5" fill="#b82828" textLength="6.8" lengthAdjust="spacingAndGlyphs">10</text><path d="M7.9 141.3 L22.8 126.4" stroke="#1848a8" stroke-width="1.8"/><circle cx="22.8" cy="126.4" r="2.7" fill="url(#gRed)"/><circle cx="7.9" cy="141.3" r="2.7" fill="url(#gRed)"/><circle cx="15.4" cy="159.3" r="9.3" fill="none" stroke="#1848a8" stroke-width="1.6"/><path d="M10.3 164.4 L20.5 154.2" stroke="#1848a8" stroke-width="1.4"/><path d="M20.9 153.8 L17.8 154.6 L20.1 156.9 Z M9.9 164.8 L13 164 L10.7 161.7 Z" fill="#1848a8"/><circle cx="15.2" cy="159.4" r="2.3" fill="url(#gRed)"/><ellipse cx="15.4" cy="185" rx="10" ry="5.3" fill="none" stroke="#1848a8" stroke-width="1.6"/><circle cx="15.4" cy="180" r="2" fill="url(#gRed)"/><circle cx="23.9" cy="185.5" r="2" fill="url(#gRed)"/><path d="M8.5 204.2 Q15.5 199 22.8 204.2 M8.5 204.2 Q3.5 211 8.8 218.6 M8.5 204.2 L22.8 218.6" fill="none" stroke="#1848a8" stroke-width="1.5"/><circle cx="8.5" cy="204.2" r="2.6" fill="url(#gRed)"/><circle cx="22.8" cy="204.2" r="2.6" fill="url(#gRed)"/><circle cx="8.8" cy="218.6" r="2.6" fill="url(#gRed)"/><circle cx="22.8" cy="218.6" r="2.6" fill="url(#gRed)"/><rect x="7" y="229.3" width="16.6" height="15.6" fill="none" stroke="#1848a8" stroke-width="1.6"/><circle cx="23.8" cy="229.4" r="2" fill="url(#gRed)"/><text x="15.3" y="272" text-anchor="middle" font-family="Liberation Serif" font-weight="bold" font-size="28" fill="url(#gA)" stroke="#0a58c0" stroke-width="0.9" stroke-linejoin="round">A</text><rect x="5.5" y="286.3" width="14.3" height="11" fill="#eef4f4" stroke="#7a8282" stroke-width="1"/><circle cx="9.3" cy="292.8" r="2.4" fill="none" stroke="#555" stroke-width="1.2"/><path d="M7.2 291.5 Q8 288.8 10.8 289" fill="none" stroke="#555" stroke-width="1.1"/><rect x="6.5" y="279.5" width="6" height="4.5" fill="#fff" stroke="#4a58d0" stroke-width="1"/><rect x="13.8" y="290.3" width="5" height="4.3" fill="#fff" stroke="#4a58d0" stroke-width="1"/><path d="M11.3 283.8 Q15 277.8 20.5 278.5 Q25 279.5 24 286 L22.5 289.5" fill="none" stroke="#900010" stroke-width="3.4"/><path d="M11.3 283.8 Q15 277.8 20.5 278.5 Q25 279.5 24 286 L22.5 289.5" fill="none" stroke="#d80818" stroke-width="2"/><path d="M15.5 289 L24.8 292.2 L20.5 283.5 Z" fill="#c00010"/><path d="M14.7 306.3 L20.3 311.8 L13.8 319.8 L7.6 313.4 Z" fill="#c00020" stroke="#700010" stroke-width="0.7"/><path d="M14.7 306.6 L19.8 311.6 L10 312.2 Z" fill="#48e0e8"/><path d="M9.5 313.5 L19.5 312.2 L14 318.3 Z" fill="#f00038"/><path d="M20.6 312 Q23.6 315 20 320.8" fill="none" stroke="#f01030" stroke-width="1.6"/><path d="M5.3 332.5 L9 331 L14 331.8 L17 330.8 L21.5 331.5 L25.8 331.5 L25.8 347.8 L8 349.5 L5.3 347.5 Z" fill="#9c9c9c"/><path d="M5.3 332.5 L9 331 L14 331.8 L17 330.8 L21.5 331.5 L25.8 331.5 L25.5 333.5 L8 334.3 Z" fill="#c8c8c8"/><path d="M7.5 336.5 L25.8 336.1" stroke="#dadada" stroke-width="0.8"/><path d="M7.5 339.5 L25.8 339.1" stroke="#dadada" stroke-width="0.8"/><path d="M7.5 342.5 L25.8 342.1" stroke="#dadada" stroke-width="0.8"/><path d="M7.5 345.5 L25.8 345.1" stroke="#dadada" stroke-width="0.8"/><path d="M11 334.3 V336.7" stroke="#dadada" stroke-width="0.8"/><path d="M16 334.3 V336.7" stroke="#dadada" stroke-width="0.8"/><path d="M21 334.3 V336.7" stroke="#dadada" stroke-width="0.8"/><path d="M13.5 337.3 V339.7" stroke="#dadada" stroke-width="0.8"/><path d="M18.5 337.3 V339.7" stroke="#dadada" stroke-width="0.8"/><path d="M23.5 337.3 V339.7" stroke="#dadada" stroke-width="0.8"/><path d="M11 340.3 V342.7" stroke="#dadada" stroke-width="0.8"/><path d="M16 340.3 V342.7" stroke="#dadada" stroke-width="0.8"/><path d="M21 340.3 V342.7" stroke="#dadada" stroke-width="0.8"/><path d="M13.5 343.3 V345.7" stroke="#dadada" stroke-width="0.8"/><path d="M18.5 343.3 V345.7" stroke="#dadada" stroke-width="0.8"/><path d="M23.5 343.3 V345.7" stroke="#dadada" stroke-width="0.8"/><path d="M11 346.3 V348.7" stroke="#dadada" stroke-width="0.8"/><path d="M16 346.3 V348.7" stroke="#dadada" stroke-width="0.8"/><path d="M21 346.3 V348.7" stroke="#dadada" stroke-width="0.8"/><path d="M5.3 332.5 L8 334.3 L8 349.5 L5.3 347.5 Z" fill="#888"/><path d="M10 355.3 L20 355.3 L20 372.3 L12 375.3 L12 371 L10 371 Z" fill="#7a7a7a"/><path d="M12 364 L18.8 362.8 L18.8 369.5 L12 371 Z" fill="#fff" opacity="0.9"/><path d="M13.2 358 L18.8 357 L18.8 362 L13.2 363 Z" fill="#fff" opacity="0.9"/><path d="M15.5 357 V370.5 M12 366.5 L18.8 365.2 M13 361 L18.8 360" stroke="#7a7a7a" stroke-width="0.9"/><rect x="9.3" y="383.3" width="11.7" height="15.7" fill="#7a7a7a"/><rect x="10.8" y="384.8" width="3.6" height="5.6" fill="#fff"/><rect x="15.6" y="384.8" width="3.6" height="5.6" fill="#fff"/><rect x="10.8" y="391.6" width="3.6" height="5.6" fill="#fff"/><rect x="15.6" y="391.6" width="3.6" height="5.6" fill="#fff"/><rect x="9.3" y="397.5" width="11.7" height="1.6" fill="#555"/><path d="M7.5 414.3 H22.8" stroke="#555" stroke-width="1.6"/><path d="M8.8 415 V421.5 M20.5 415 V421.5" stroke="#555" stroke-width="1.6"/><path d="M9 417 H13.5 M9 419.5 H13.5 M13.5 415 V421" stroke="#8a8a8a" stroke-width="0.9"/><text x="623.1" y="87.1" font-family="Liberation Sans" font-size="13.8" fill="#111" stroke="#111" stroke-width="0.35" textLength="21.3" lengthAdjust="spacingAndGlyphs">XY</text><path d="M626 116.5 L640.5 100.5 Q642.5 98.5 643.8 100 Q644.8 101.5 642.8 103.3 L628 118 L625 118.5 Z" fill="#e4e4e4" stroke="#9a9a9a" stroke-width="0.8"/><path d="M627 117 L641.5 101.8" stroke="#c0c0c0" stroke-width="0.8"/><path d="M634.3 126 V142.5 M625.5 134.2 H643" stroke="#8c8c8c" stroke-width="1.6"/><path d="M634.3 124.8 L631.8 128 H636.8 Z M634.3 143.7 L631.8 140.5 H636.8 Z M624.5 134.2 L627.7 131.7 V136.7 Z M644 134.2 L640.8 131.7 V136.7 Z" fill="#8c8c8c"/><path d="M626.3 150.5 H634 L635.5 152 V166 H626.3 Z" fill="#f4f4f4" stroke="#9a9a9a" stroke-width="0.8"/><path d="M630.5 152.5 H640 L642 154.5 V169 H630.5 Z" fill="#f8f8f8" stroke="#9a9a9a" stroke-width="0.8"/><path d="M632 155 H640.5" stroke="#b8b8b8" stroke-width="0.7" stroke-dasharray="1.5 0.7"/><path d="M632 157 H640.5" stroke="#b8b8b8" stroke-width="0.7" stroke-dasharray="1.5 0.7"/><path d="M632 159 H640.5" stroke="#b8b8b8" stroke-width="0.7" stroke-dasharray="1.5 0.7"/><path d="M632 161 H640.5" stroke="#b8b8b8" stroke-width="0.7" stroke-dasharray="1.5 0.7"/><path d="M632 163 H640.5" stroke="#b8b8b8" stroke-width="0.7" stroke-dasharray="1.5 0.7"/><path d="M632 165 H640.5" stroke="#b8b8b8" stroke-width="0.7" stroke-dasharray="1.5 0.7"/><path d="M632 167 H640.5" stroke="#b8b8b8" stroke-width="0.7" stroke-dasharray="1.5 0.7"/><g transform="translate(541.5 137.5)"><path d="M82.3 41.5 C83 38.8 88.5 38.8 92.5 42.8 L100.3 52.5 C101.6 54.3 100.8 56.3 99 55.3 L90.5 47.6 C87 45 82 44.5 82.3 41.5 Z" fill="#a8a8a8" stroke="#6a6a6a" stroke-width="0.7"/><path d="M101.8 41.6 C102.2 43.3 100.5 44.4 98.5 44.7 C95 45.5 92.5 47.5 90.5 50.5 L86.2 56.3 C84.8 57.8 82.3 57.3 82.3 55.3 C82.5 53 84.5 50.5 87 48 L92 43.2 C95.3 40.3 99.8 39.6 101.8 41.6 Z" fill="#b0b0b0" stroke="#6a6a6a" stroke-width="0.7"/><path d="M84 41 C87 40 90 41 92 43" fill="none" stroke="#e8e8e8" stroke-width="0.8"/></g><path d="M624.5 220.5 L643.5 201.5" stroke="#707070" stroke-width="1.6" stroke-linecap="round"/><path d="M630.3 207.5 L637.5 214.7" stroke="#808080" stroke-width="3"/><path d="M630.3 207.5 L637.5 214.7" stroke="#c8c8c8" stroke-width="1.2"/><path d="M628.8 237.5 A6.5 6.5 0 1 0 634.5 231" fill="none" stroke="#8a8a8a" stroke-width="2.2"/><path d="M628.8 237.5 A6.5 6.5 0 1 0 634.5 231" fill="none" stroke="#dcdcdc" stroke-width="0.8"/><path d="M625 237.3 L629.3 233 L632 238.6 Z" fill="#a0a0a0"/><rect x="625.3" y="255.5" width="8" height="12.5" fill="#dcdcdc" stroke="#9a9a9a" stroke-width="0.8"/><path d="M633 257.5 Q638 256 640.5 258 V267 Q637 268.5 633 268 Z" fill="#a8a8a8"/><rect x="641.8" y="257.3" width="1.2" height="11" fill="#666"/><path d="M627 260 H637 M627 263 H637 M627 266 H635" stroke="#f4f4f4" stroke-width="0.8"/><rect x="619" y="278.5" width="29" height="1" fill="#c8c8c8"/><rect x="619" y="65" width="29" height="1" fill="#d0d0d0"/></svg>
</body></html>
